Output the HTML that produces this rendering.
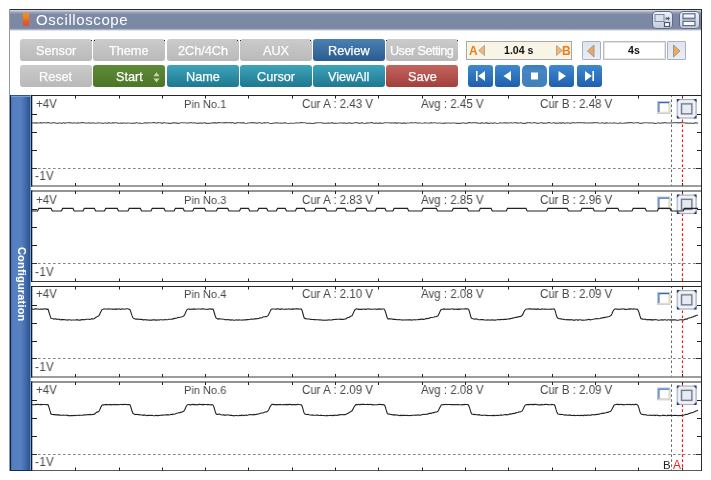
<!DOCTYPE html><html><head><meta charset="utf-8"><style>
*{margin:0;padding:0;box-sizing:border-box}
html,body{width:711px;height:480px;overflow:hidden;background:#fff}
body{position:relative;font-family:"Liberation Sans",sans-serif}
.a{position:absolute}
.t{white-space:nowrap;will-change:transform}
.btn span{will-change:transform;display:inline-block}
.btn{border-radius:3px;color:#fbfbfb;font-size:12.7px;line-height:24px;-webkit-text-stroke:0.25px #fff;text-align:center;white-space:nowrap}
.lbl{font-size:12px;line-height:14px;color:#474747;transform:scaleX(0.96);transform-origin:0 0}
</style></head><body><div class="a" style="left:9px;top:9px;width:693px;height:1px;background:#2a2a2a"></div>
<div class="a" style="left:9px;top:9px;width:1px;height:462px;background:#9a9a9a"></div>
<div class="a" style="left:701px;top:9px;width:1px;height:462px;background:#2a2a2a"></div>
<div class="a" style="left:10px;top:10px;width:691px;height:21px;background:linear-gradient(#dfe2ea 0px,#bcc2d2 1px,#97a2ba 2.5px,#7d8aa5 4.5px,#7b88a3 18px,#8591ab 19px,#cfd4de 20px,#f2f3f6 21px)"></div>
<div class="a" style="left:23px;top:12.5px;width:6.2px;height:13.8px;background:linear-gradient(#fb8c12 0,#f57d18 40%,#ea5f26 58%,#e24c2e 100%)"></div>
<div class="a t" style="left:36px;top:10px;font-size:15px;line-height:20px;color:#fff;letter-spacing:0.6px">Oscilloscope</div>
<svg class="a" style="left:652px;top:11px" width="21" height="18" viewBox="0 0 21 18">
<defs><linearGradient id="ig" x1="0" y1="0" x2="0" y2="1"><stop offset="0" stop-color="#f2f4f9"/><stop offset="1" stop-color="#c3cadb"/></linearGradient></defs>
<rect x="0.5" y="0.5" width="20" height="17" rx="3.5" fill="url(#ig)" stroke="#5d6b88"/>
<rect x="3" y="3.5" width="9" height="7" fill="#dbe2ee" stroke="#7c89a6"/>
<path d="M13.5 6.5 h2.5 v-1 l2 2 -2 2 v-1 h-2.5z" fill="#4f5d7c"/>
<rect x="12.5" y="11.5" width="5" height="4" fill="#fff" stroke="#4c5a78" stroke-width="1.2"/>
</svg>
<svg class="a" style="left:679px;top:11px" width="21" height="18" viewBox="0 0 21 18">
<rect x="0.5" y="0.5" width="20" height="17" rx="3.5" fill="url(#ig)" stroke="#5d6b88"/>
<rect x="4" y="2.8" width="12" height="4.4" fill="#f4f7fb" stroke="#4f5d7c" stroke-width="1.1"/>
<rect x="4" y="10.3" width="12" height="4.4" fill="#f4f7fb" stroke="#4f5d7c" stroke-width="1.1"/>
<line x1="3" y1="8.7" x2="17" y2="8.7" stroke="#98a3ba" stroke-width="1"/>
</svg>
<div class="a btn" style="left:20px;top:39px;width:72px;height:22px;background:linear-gradient(#cbcbcb,#b9b9b9)"><span style="">Sensor</span></div>
<div class="a btn" style="left:93px;top:39px;width:72px;height:22px;background:linear-gradient(#cbcbcb,#b9b9b9)"><span style="">Theme</span></div>
<div class="a btn" style="left:167px;top:39px;width:72px;height:22px;background:linear-gradient(#cbcbcb,#b9b9b9)"><span style="">2Ch/4Ch</span></div>
<div class="a btn" style="left:240px;top:39px;width:72px;height:22px;background:linear-gradient(#cbcbcb,#b9b9b9)"><span style="">AUX</span></div>
<div class="a btn" style="left:313px;top:39px;width:72px;height:22px;background:linear-gradient(#4b80b1,#2b5b8f)"><span style="">Review</span></div>
<div class="a btn" style="left:386px;top:39px;width:72px;height:22px;background:linear-gradient(#cbcbcb,#b9b9b9)"><span style="letter-spacing:-0.55px;">User Setting</span></div>
<div class="a btn" style="left:20px;top:65px;width:72px;height:22px;background:linear-gradient(#cbcbcb,#b9b9b9)"><span style="">Reset</span></div>
<div class="a btn" style="left:93px;top:65px;width:72px;height:22px;background:linear-gradient(#5f8a37,#4b7628)"><span style="">Start</span></div>
<div class="a btn" style="left:167px;top:65px;width:72px;height:22px;background:linear-gradient(#3ea4ba,#1e7890)"><span style="">Name</span></div>
<div class="a btn" style="left:240px;top:65px;width:72px;height:22px;background:linear-gradient(#3ea4ba,#1e7890)"><span style="">Cursor</span></div>
<div class="a btn" style="left:313px;top:65px;width:72px;height:22px;background:linear-gradient(#3ea4ba,#1e7890)"><span style="">ViewAll</span></div>
<div class="a btn" style="left:386px;top:65px;width:72px;height:22px;background:linear-gradient(#c4655f,#a23f3c)"><span style="">Save</span></div>
<svg class="a" style="left:152.5px;top:71.5px" width="7" height="11" viewBox="0 0 7 11"><path d="M3.5 0.3 L6.6 4.3 H0.4Z M3.5 10.5 L6.6 6.5 H0.4Z" fill="#c9d4b0"/></svg>
<div class="a" style="left:466px;top:41px;width:106px;height:19px;background:#f8f5e7;border:1px solid #a9a9a4"></div>
<div class="a t" style="left:469px;top:41.5px;font-size:12px;line-height:19px;font-weight:bold;color:#f07a16">A</div>
<svg class="a" style="left:478px;top:45px" width="8" height="11" viewBox="0 0 8 11"><path d="M6.5 0.5 V10.5 L0.7 5.5Z" fill="#f6b477" stroke="#9aa283" stroke-width="0.8"/></svg>
<div class="a t" style="left:503.5px;top:41px;font-size:10.6px;line-height:19.5px;font-weight:bold;color:#111">1.04 s</div>
<svg class="a" style="left:554.5px;top:45px" width="8" height="11" viewBox="0 0 8 11"><path d="M1.5 0.5 V10.5 L7.3 5.5Z" fill="#f6b477" stroke="#9aa283" stroke-width="0.8"/></svg>
<div class="a t" style="left:562px;top:41.5px;font-size:12px;line-height:19px;font-weight:bold;color:#f07a16">B</div>
<div class="a" style="left:582px;top:41px;width:19px;height:19px;background:linear-gradient(#dfe4ee,#e9edf4);border:1px solid #a9b1c0;border-radius:1px"></div>
<svg class="a" style="left:586px;top:44px" width="11" height="14" viewBox="0 0 11 14"><path d="M8 1 V13 L1.5 7Z" fill="#f3a850" stroke="#8b95a0" stroke-width="0.9"/></svg>
<div class="a" style="left:603px;top:41px;width:63px;height:19px;background:#fff;border:1px solid #bdbdbd;box-shadow:inset 1px 1px 0 #e2e2e2,inset -1px -1px 0 #e6e6e6"></div>
<div class="a t" style="left:628px;top:41px;font-size:10.6px;line-height:19.5px;font-weight:bold;color:#111">4s</div>
<div class="a" style="left:667px;top:41px;width:19px;height:19px;background:linear-gradient(#dfe4ee,#e9edf4);border:1px solid #a9b1c0;border-radius:1px"></div>
<svg class="a" style="left:671px;top:44px" width="11" height="14" viewBox="0 0 11 14"><path d="M2.5 1 V13 L9 7Z" fill="#f3a850" stroke="#8b95a0" stroke-width="0.9"/></svg>
<div class="a" style="left:468px;top:65px;width:25px;height:22px;border-radius:3px;background:linear-gradient(#3f89cf,#1f5fad)"></div>
<svg class="a" style="left:468px;top:65px" width="25" height="22" viewBox="0 0 25 22"><path d="M8 6 h1.6 v10 h-1.6z M17 6 V16 L10.2 11Z" fill="#fff"/></svg>
<div class="a" style="left:495px;top:65px;width:25px;height:22px;border-radius:3px;background:linear-gradient(#3f89cf,#1f5fad)"></div>
<svg class="a" style="left:495px;top:65px" width="25" height="22" viewBox="0 0 25 22"><path d="M16 6 V16 L8.5 11Z" fill="#fff"/></svg>
<div class="a" style="left:522px;top:65px;width:25px;height:22px;border-radius:5px;background:linear-gradient(#3a7cc0 0,#4a88c4 35%,#4584bf 40%,#4080ba 100%)"></div>
<svg class="a" style="left:522px;top:65px" width="25" height="22" viewBox="0 0 25 22"><rect x="9" y="7.5" width="7" height="7" fill="#fff"/></svg>
<div class="a" style="left:549px;top:65px;width:25px;height:22px;border-radius:3px;background:linear-gradient(#3f89cf,#1f5fad)"></div>
<svg class="a" style="left:549px;top:65px" width="25" height="22" viewBox="0 0 25 22"><path d="M9.5 6 V16 L17 11Z" fill="#fff"/></svg>
<div class="a" style="left:577px;top:65px;width:25px;height:22px;border-radius:3px;background:linear-gradient(#3f89cf,#1f5fad)"></div>
<svg class="a" style="left:577px;top:65px" width="25" height="22" viewBox="0 0 25 22"><path d="M8 6 V16 L14.8 11Z M15.4 6 h1.6 v10 h-1.6z" fill="#fff"/></svg>
<div class="a" style="left:10px;top:95px;width:21px;height:376px;background:linear-gradient(90deg,#0c2444 0,#0c2444 1px,#4670b0 1px,#5680c2 3px,#5680c0 11px,#3a64a2 17px,#2a5090 20px,#7ba2cc 20px,#7ba2cc 21px)"></div>
<div class="a" style="left:10px;top:470px;width:22px;height:1px;background:#1a2a50"></div>
<div class="a" style="left:11px;top:95px;width:19px;height:1px;background:#2c5288"></div>
<div class="a" style="left:11px;top:96px;width:19px;height:1px;background:#7d9dd0"></div>
<div class="a t" style="left:26.6px;top:246.5px;transform-origin:0 0;transform:rotate(90deg);font-size:11px;font-weight:bold;line-height:11px;color:#fff;white-space:nowrap;letter-spacing:0.18px">Configuration</div>
<svg class="a" style="left:0;top:0" width="711" height="480" viewBox="0 0 711 480"><rect x="31" y="95.5" width="670" height="90.5" fill="#fff"/><line x1="31" y1="95.5" x2="701" y2="95.5" stroke="#262626" stroke-width="1"/><line x1="31" y1="186.0" x2="701" y2="186.0" stroke="#3a3a3a" stroke-width="1"/><line x1="31.65" y1="95.0" x2="31.65" y2="186.5" stroke="#0e1a2c" stroke-width="1.3"/><line x1="75.5" y1="95.5" x2="75.5" y2="98.5" stroke="#222" stroke-width="1"/><line x1="75.5" y1="183.0" x2="75.5" y2="186.0" stroke="#222" stroke-width="1"/><line x1="119.5" y1="95.5" x2="119.5" y2="98.5" stroke="#222" stroke-width="1"/><line x1="119.5" y1="183.0" x2="119.5" y2="186.0" stroke="#222" stroke-width="1"/><line x1="162.5" y1="95.5" x2="162.5" y2="98.5" stroke="#222" stroke-width="1"/><line x1="162.5" y1="183.0" x2="162.5" y2="186.0" stroke="#222" stroke-width="1"/><line x1="205.5" y1="95.5" x2="205.5" y2="98.5" stroke="#222" stroke-width="1"/><line x1="205.5" y1="183.0" x2="205.5" y2="186.0" stroke="#222" stroke-width="1"/><line x1="248.5" y1="95.5" x2="248.5" y2="98.5" stroke="#222" stroke-width="1"/><line x1="248.5" y1="183.0" x2="248.5" y2="186.0" stroke="#222" stroke-width="1"/><line x1="292.5" y1="95.5" x2="292.5" y2="98.5" stroke="#222" stroke-width="1"/><line x1="292.5" y1="183.0" x2="292.5" y2="186.0" stroke="#222" stroke-width="1"/><line x1="335.5" y1="95.5" x2="335.5" y2="98.5" stroke="#222" stroke-width="1"/><line x1="335.5" y1="183.0" x2="335.5" y2="186.0" stroke="#222" stroke-width="1"/><line x1="378.5" y1="95.5" x2="378.5" y2="98.5" stroke="#222" stroke-width="1"/><line x1="378.5" y1="183.0" x2="378.5" y2="186.0" stroke="#222" stroke-width="1"/><line x1="422.5" y1="95.5" x2="422.5" y2="98.5" stroke="#222" stroke-width="1"/><line x1="422.5" y1="183.0" x2="422.5" y2="186.0" stroke="#222" stroke-width="1"/><line x1="465.5" y1="95.5" x2="465.5" y2="98.5" stroke="#222" stroke-width="1"/><line x1="465.5" y1="183.0" x2="465.5" y2="186.0" stroke="#222" stroke-width="1"/><line x1="508.5" y1="95.5" x2="508.5" y2="98.5" stroke="#222" stroke-width="1"/><line x1="508.5" y1="183.0" x2="508.5" y2="186.0" stroke="#222" stroke-width="1"/><line x1="552.5" y1="95.5" x2="552.5" y2="98.5" stroke="#222" stroke-width="1"/><line x1="552.5" y1="183.0" x2="552.5" y2="186.0" stroke="#222" stroke-width="1"/><line x1="595.5" y1="95.5" x2="595.5" y2="98.5" stroke="#222" stroke-width="1"/><line x1="595.5" y1="183.0" x2="595.5" y2="186.0" stroke="#222" stroke-width="1"/><line x1="638.5" y1="95.5" x2="638.5" y2="98.5" stroke="#222" stroke-width="1"/><line x1="638.5" y1="183.0" x2="638.5" y2="186.0" stroke="#222" stroke-width="1"/><line x1="682.5" y1="95.5" x2="682.5" y2="98.5" stroke="#222" stroke-width="1"/><line x1="682.5" y1="183.0" x2="682.5" y2="186.0" stroke="#222" stroke-width="1"/><line x1="32" y1="114.5" x2="37" y2="114.5" stroke="#222" stroke-width="1"/><line x1="697" y1="114.5" x2="701" y2="114.5" stroke="#222" stroke-width="1"/><line x1="32" y1="132.5" x2="37" y2="132.5" stroke="#222" stroke-width="1"/><line x1="697" y1="132.5" x2="701" y2="132.5" stroke="#222" stroke-width="1"/><line x1="32" y1="150.5" x2="37" y2="150.5" stroke="#222" stroke-width="1"/><line x1="697" y1="150.5" x2="701" y2="150.5" stroke="#222" stroke-width="1"/><line x1="32" y1="168.5" x2="701" y2="168.5" stroke="#858585" stroke-width="1" stroke-dasharray="2.6 2.4" stroke-dashoffset="-1"/><line x1="32" y1="168.5" x2="37" y2="168.5" stroke="#333" stroke-width="1"/><line x1="696" y1="168.5" x2="701" y2="168.5" stroke="#333" stroke-width="1"/><line x1="671.5" y1="96.0" x2="671.5" y2="185.5" stroke="#6a6a6a" stroke-width="1" stroke-dasharray="2.6 2.4" stroke-dashoffset="1.5"/><line x1="682.5" y1="96.0" x2="682.5" y2="185.5" stroke="#f01818" stroke-width="1.2" stroke-dasharray="2.6 2.4" stroke-dashoffset="1.5"/><rect x="657.5" y="101.5" width="12.5" height="11.8" fill="#fff" stroke="#c4c4c4" stroke-width="1"/><path d="M659 112.3 H669 V102.8" fill="none" stroke="#e0d6bd" stroke-width="1.1"/><path d="M658.9 112.3 V102.7 H669.2" fill="none" stroke="#2f6cc4" stroke-width="1.2"/><rect x="677.2" y="99.5" width="19" height="18.6" rx="2.5" fill="#d9dee9" stroke="#a4acbc" stroke-width="1"/><rect x="679.2" y="101.5" width="15" height="14.6" rx="2" fill="none" stroke="#f3f5f9" stroke-width="1.6"/><rect x="681.6" y="103.9" width="10.2" height="9.9" fill="#e6eaf2" stroke="#737b8c" stroke-width="1.3"/><path d="M676.8 99.1 h3.2 l-3.2 3.2z" fill="#1f3c6e"/><path d="M696.6 99.1 h-3.2 l3.2 3.2z" fill="#1f3c6e"/><path d="M676.8 118.5 h3.2 l-3.2 -3.2z" fill="#1f3c6e"/><path d="M696.6 118.5 h-3.2 l3.2 -3.2z" fill="#1f3c6e"/><polyline points="32.0,122.84 33.5,122.69 35.0,123.14 36.5,122.62 38.0,123.03 39.5,122.88 41.0,122.60 42.5,123.01 44.0,122.58 45.5,122.94 47.0,122.61 48.5,122.63 50.0,122.93 51.5,123.29 53.0,122.66 54.5,122.75 56.0,123.11 57.5,123.40 59.0,123.07 60.5,122.91 62.0,123.43 63.5,122.59 65.0,123.32 66.5,122.81 68.0,122.68 69.5,122.66 71.0,122.83 72.5,123.28 74.0,122.71 75.5,123.07 77.0,123.13 78.5,122.89 80.0,123.04 81.5,122.61 83.0,122.60 84.5,122.74 86.0,123.16 87.5,122.93 89.0,122.83 90.5,123.08 92.0,122.96 93.5,122.82 95.0,123.26 96.5,123.18 98.0,122.77 99.5,123.07 101.0,123.02 102.5,123.34 104.0,123.21 105.5,122.81 107.0,123.43 108.5,122.66 110.0,122.93 111.5,123.23 113.0,122.69 114.5,122.99 116.0,122.59 117.5,123.15 119.0,123.24 120.5,123.07 122.0,123.34 123.5,122.83 125.0,123.18 126.5,123.08 128.0,123.07 129.5,122.96 131.0,123.31 132.5,123.40 134.0,122.98 135.5,123.15 137.0,122.60 138.5,123.18 140.0,123.13 141.5,123.44 143.0,123.29 144.5,122.81 146.0,122.90 147.5,123.15 149.0,122.57 150.5,122.97 152.0,122.70 153.5,122.66 155.0,122.60 156.5,123.24 158.0,122.67 159.5,122.77 161.0,122.90 162.5,123.33 164.0,122.62 165.5,122.95 167.0,123.04 168.5,123.35 170.0,123.29 171.5,123.33 173.0,122.80 174.5,122.92 176.0,122.87 177.5,123.35 179.0,123.41 180.5,122.69 182.0,122.71 183.5,122.76 185.0,122.76 186.5,122.99 188.0,123.08 189.5,122.79 191.0,122.55 192.5,122.93 194.0,122.88 195.5,123.06 197.0,123.41 198.5,123.17 200.0,123.01 201.5,123.11 203.0,123.16 204.5,122.60 206.0,123.36 207.5,123.25 209.0,123.34 210.5,123.27 212.0,122.90 213.5,122.91 215.0,122.64 216.5,123.12 218.0,122.61 219.5,122.61 221.0,122.74 222.5,122.70 224.0,122.86 225.5,122.60 227.0,122.55 228.5,122.69 230.0,122.64 231.5,122.88 233.0,122.57 234.5,123.34 236.0,123.10 237.5,122.68 239.0,122.78 240.5,122.86 242.0,122.88 243.5,122.66 245.0,123.31 246.5,123.44 248.0,122.97 249.5,122.99 251.0,122.63 252.5,122.64 254.0,122.86 255.5,122.79 257.0,123.30 258.5,122.70 260.0,122.57 261.5,123.41 263.0,123.03 264.5,122.68 266.0,123.04 267.5,122.57 269.0,123.03 270.5,123.43 272.0,123.33 273.5,123.18 275.0,122.79 276.5,122.88 278.0,122.70 279.5,123.24 281.0,123.03 282.5,123.25 284.0,122.85 285.5,122.75 287.0,123.28 288.5,123.44 290.0,123.32 291.5,123.28 293.0,123.29 294.5,123.22 296.0,122.75 297.5,123.02 299.0,122.87 300.5,122.58 302.0,122.58 303.5,122.80 305.0,122.78 306.5,123.17 308.0,123.41 309.5,122.95 311.0,123.39 312.5,123.44 314.0,123.41 315.5,122.88 317.0,122.75 318.5,122.75 320.0,122.73 321.5,122.73 323.0,123.11 324.5,123.36 326.0,123.31 327.5,122.98 329.0,123.14 330.5,123.27 332.0,122.63 333.5,123.14 335.0,123.37 336.5,123.25 338.0,123.23 339.5,122.98 341.0,122.71 342.5,123.26 344.0,122.85 345.5,123.27 347.0,123.42 348.5,122.91 350.0,122.91 351.5,123.40 353.0,123.20 354.5,122.70 356.0,122.66 357.5,122.69 359.0,123.36 360.5,123.28 362.0,122.68 363.5,123.29 365.0,123.43 366.5,123.14 368.0,122.87 369.5,123.04 371.0,122.67 372.5,122.56 374.0,123.42 375.5,123.13 377.0,123.02 378.5,123.39 380.0,122.94 381.5,123.33 383.0,123.29 384.5,122.74 386.0,122.78 387.5,122.81 389.0,122.77 390.5,123.08 392.0,122.78 393.5,122.93 395.0,122.67 396.5,123.37 398.0,122.87 399.5,122.96 401.0,123.08 402.5,123.36 404.0,122.93 405.5,123.38 407.0,123.00 408.5,123.03 410.0,123.02 411.5,122.57 413.0,122.95 414.5,122.71 416.0,122.55 417.5,123.27 419.0,122.71 420.5,122.98 422.0,123.20 423.5,123.05 425.0,122.84 426.5,123.02 428.0,123.05 429.5,123.26 431.0,122.65 432.5,123.05 434.0,122.77 435.5,122.80 437.0,123.25 438.5,123.01 440.0,123.06 441.5,123.23 443.0,123.37 444.5,122.95 446.0,123.10 447.5,123.00 449.0,123.01 450.5,123.17 452.0,122.96 453.5,123.03 455.0,122.98 456.5,123.40 458.0,123.18 459.5,123.34 461.0,123.40 462.5,122.78 464.0,123.05 465.5,123.40 467.0,123.31 468.5,122.67 470.0,122.66 471.5,122.95 473.0,122.62 474.5,122.77 476.0,122.62 477.5,123.15 479.0,123.26 480.5,123.36 482.0,122.69 483.5,123.19 485.0,123.14 486.5,122.68 488.0,123.34 489.5,123.42 491.0,122.75 492.5,123.41 494.0,122.91 495.5,122.99 497.0,123.44 498.5,123.30 500.0,122.70 501.5,122.94 503.0,123.01 504.5,122.86 506.0,122.73 507.5,122.84 509.0,123.20 510.5,122.57 512.0,123.05 513.5,122.95 515.0,122.57 516.5,122.85 518.0,123.11 519.5,123.01 521.0,122.61 522.5,123.44 524.0,123.26 525.5,123.42 527.0,122.64 528.5,122.79 530.0,122.59 531.5,123.25 533.0,122.79 534.5,122.67 536.0,122.93 537.5,123.37 539.0,123.29 540.5,122.78 542.0,122.68 543.5,123.38 545.0,123.06 546.5,123.18 548.0,122.63 549.5,122.60 551.0,123.17 552.5,122.93 554.0,122.62 555.5,123.39 557.0,123.12 558.5,123.27 560.0,122.63 561.5,123.32 563.0,122.61 564.5,123.33 566.0,122.96 567.5,122.86 569.0,123.05 570.5,123.38 572.0,122.79 573.5,122.67 575.0,123.02 576.5,122.76 578.0,122.65 579.5,122.70 581.0,122.60 582.5,122.73 584.0,122.83 585.5,122.82 587.0,123.23 588.5,122.81 590.0,123.00 591.5,122.71 593.0,122.86 594.5,122.57 596.0,122.78 597.5,122.56 599.0,123.21 600.5,123.05 602.0,122.72 603.5,122.98 605.0,123.39 606.5,122.65 608.0,123.29 609.5,122.94 611.0,123.00 612.5,123.30 614.0,122.90 615.5,123.01 617.0,123.17 618.5,123.43 620.0,122.86 621.5,123.30 623.0,123.19 624.5,123.12 626.0,122.91 627.5,122.86 629.0,122.60 630.5,122.67 632.0,122.61 633.5,123.22 635.0,122.78 636.5,122.70 638.0,122.63 639.5,123.31 641.0,123.33 642.5,123.15 644.0,122.80 645.5,122.77 647.0,122.81 648.5,122.96 650.0,122.69 651.5,122.95 653.0,122.79 654.5,123.42 656.0,123.43 657.5,123.04 659.0,122.77 660.5,123.42 662.0,122.83 663.5,122.87 665.0,122.55 666.5,122.89 668.0,122.98 669.5,123.00 671.0,122.73 672.5,123.00 674.0,122.55 675.5,122.79 677.0,122.63 678.5,122.91 680.0,122.59 681.5,122.57 683.0,122.82 684.5,122.76 686.0,123.08 687.5,123.03 689.0,123.23 690.5,123.14 692.0,123.19 693.5,123.34 695.0,122.90 696.5,122.84 698.0,123.44" fill="none" stroke="#555" stroke-width="1.1"/><rect x="31" y="191.0" width="670" height="90.5" fill="#fff"/><line x1="31" y1="191.0" x2="701" y2="191.0" stroke="#262626" stroke-width="1"/><line x1="31" y1="281.5" x2="701" y2="281.5" stroke="#3a3a3a" stroke-width="1"/><line x1="31.65" y1="190.5" x2="31.65" y2="282.0" stroke="#0e1a2c" stroke-width="1.3"/><line x1="75.5" y1="191.0" x2="75.5" y2="194.0" stroke="#222" stroke-width="1"/><line x1="75.5" y1="278.5" x2="75.5" y2="281.5" stroke="#222" stroke-width="1"/><line x1="119.5" y1="191.0" x2="119.5" y2="194.0" stroke="#222" stroke-width="1"/><line x1="119.5" y1="278.5" x2="119.5" y2="281.5" stroke="#222" stroke-width="1"/><line x1="162.5" y1="191.0" x2="162.5" y2="194.0" stroke="#222" stroke-width="1"/><line x1="162.5" y1="278.5" x2="162.5" y2="281.5" stroke="#222" stroke-width="1"/><line x1="205.5" y1="191.0" x2="205.5" y2="194.0" stroke="#222" stroke-width="1"/><line x1="205.5" y1="278.5" x2="205.5" y2="281.5" stroke="#222" stroke-width="1"/><line x1="248.5" y1="191.0" x2="248.5" y2="194.0" stroke="#222" stroke-width="1"/><line x1="248.5" y1="278.5" x2="248.5" y2="281.5" stroke="#222" stroke-width="1"/><line x1="292.5" y1="191.0" x2="292.5" y2="194.0" stroke="#222" stroke-width="1"/><line x1="292.5" y1="278.5" x2="292.5" y2="281.5" stroke="#222" stroke-width="1"/><line x1="335.5" y1="191.0" x2="335.5" y2="194.0" stroke="#222" stroke-width="1"/><line x1="335.5" y1="278.5" x2="335.5" y2="281.5" stroke="#222" stroke-width="1"/><line x1="378.5" y1="191.0" x2="378.5" y2="194.0" stroke="#222" stroke-width="1"/><line x1="378.5" y1="278.5" x2="378.5" y2="281.5" stroke="#222" stroke-width="1"/><line x1="422.5" y1="191.0" x2="422.5" y2="194.0" stroke="#222" stroke-width="1"/><line x1="422.5" y1="278.5" x2="422.5" y2="281.5" stroke="#222" stroke-width="1"/><line x1="465.5" y1="191.0" x2="465.5" y2="194.0" stroke="#222" stroke-width="1"/><line x1="465.5" y1="278.5" x2="465.5" y2="281.5" stroke="#222" stroke-width="1"/><line x1="508.5" y1="191.0" x2="508.5" y2="194.0" stroke="#222" stroke-width="1"/><line x1="508.5" y1="278.5" x2="508.5" y2="281.5" stroke="#222" stroke-width="1"/><line x1="552.5" y1="191.0" x2="552.5" y2="194.0" stroke="#222" stroke-width="1"/><line x1="552.5" y1="278.5" x2="552.5" y2="281.5" stroke="#222" stroke-width="1"/><line x1="595.5" y1="191.0" x2="595.5" y2="194.0" stroke="#222" stroke-width="1"/><line x1="595.5" y1="278.5" x2="595.5" y2="281.5" stroke="#222" stroke-width="1"/><line x1="638.5" y1="191.0" x2="638.5" y2="194.0" stroke="#222" stroke-width="1"/><line x1="638.5" y1="278.5" x2="638.5" y2="281.5" stroke="#222" stroke-width="1"/><line x1="682.5" y1="191.0" x2="682.5" y2="194.0" stroke="#222" stroke-width="1"/><line x1="682.5" y1="278.5" x2="682.5" y2="281.5" stroke="#222" stroke-width="1"/><line x1="32" y1="209.5" x2="37" y2="209.5" stroke="#222" stroke-width="1"/><line x1="697" y1="209.5" x2="701" y2="209.5" stroke="#222" stroke-width="1"/><line x1="32" y1="227.5" x2="37" y2="227.5" stroke="#222" stroke-width="1"/><line x1="697" y1="227.5" x2="701" y2="227.5" stroke="#222" stroke-width="1"/><line x1="32" y1="245.5" x2="37" y2="245.5" stroke="#222" stroke-width="1"/><line x1="697" y1="245.5" x2="701" y2="245.5" stroke="#222" stroke-width="1"/><line x1="32" y1="263.5" x2="701" y2="263.5" stroke="#858585" stroke-width="1" stroke-dasharray="2.6 2.4" stroke-dashoffset="-1"/><line x1="32" y1="263.5" x2="37" y2="263.5" stroke="#333" stroke-width="1"/><line x1="696" y1="263.5" x2="701" y2="263.5" stroke="#333" stroke-width="1"/><line x1="671.5" y1="191.5" x2="671.5" y2="281.0" stroke="#6a6a6a" stroke-width="1" stroke-dasharray="2.6 2.4" stroke-dashoffset="3.2"/><line x1="682.5" y1="191.5" x2="682.5" y2="281.0" stroke="#f01818" stroke-width="1.2" stroke-dasharray="2.6 2.4" stroke-dashoffset="3.2"/><rect x="657.5" y="197.0" width="12.5" height="11.8" fill="#fff" stroke="#c4c4c4" stroke-width="1"/><path d="M659 207.8 H669 V198.3" fill="none" stroke="#e0d6bd" stroke-width="1.1"/><path d="M658.9 207.8 V198.2 H669.2" fill="none" stroke="#2f6cc4" stroke-width="1.2"/><rect x="677.2" y="195.0" width="19" height="18.6" rx="2.5" fill="#d9dee9" stroke="#a4acbc" stroke-width="1"/><rect x="679.2" y="197.0" width="15" height="14.6" rx="2" fill="none" stroke="#f3f5f9" stroke-width="1.6"/><rect x="681.6" y="199.4" width="10.2" height="9.9" fill="#e6eaf2" stroke="#737b8c" stroke-width="1.3"/><path d="M676.8 194.6 h3.2 l-3.2 3.2z" fill="#1f3c6e"/><path d="M696.6 194.6 h-3.2 l3.2 3.2z" fill="#1f3c6e"/><path d="M676.8 214.0 h3.2 l-3.2 -3.2z" fill="#1f3c6e"/><path d="M696.6 214.0 h-3.2 l3.2 -3.2z" fill="#1f3c6e"/><polyline points="32.0,211.00 37.6,211.00 38.8,208.40 51.1,208.40 52.3,211.00 61.4,211.00 62.6,208.40 73.0,208.40 74.2,211.00 83.1,211.00 84.3,208.40 94.4,208.40 95.6,211.00 104.5,211.00 105.7,208.40 117.3,208.40 118.5,211.00 128.0,211.00 129.2,208.40 140.4,208.40 141.6,211.00 151.0,211.00 152.2,208.40 164.0,208.40 165.2,211.00 174.1,211.00 175.3,208.40 183.1,208.40 184.3,211.00 192.8,211.00 194.0,208.40 204.6,208.40 205.8,211.00 216.4,211.00 217.6,208.40 227.7,208.40 228.9,211.00 239.5,211.00 240.7,208.40 248.5,208.40 249.7,211.00 257.5,211.00 258.7,208.40 266.7,208.40 267.9,211.00 276.3,211.00 277.5,208.40 285.3,208.40 286.5,211.00 295.4,211.00 296.6,208.40 304.4,208.40 305.6,211.00 314.5,211.00 315.7,208.40 325.8,208.40 327.0,211.00 335.9,211.00 337.1,208.40 345.1,208.40 346.3,211.00 355.2,211.00 356.4,208.40 365.9,208.40 367.1,211.00 375.4,211.00 376.6,208.40 385.0,208.40 386.2,211.00 392.9,211.00 394.1,208.40 407.5,208.40 408.7,211.00 421.8,211.00 423.0,208.40 436.4,208.40 437.6,211.00 452.1,211.00 453.3,208.40 467.3,208.40 468.5,211.00 479.1,211.00 480.3,208.40 491.1,208.40 492.3,211.00 506.3,211.00 507.5,208.40 526.0,208.40 527.2,211.00 546.8,211.00 548.0,208.40 567.3,208.40 568.5,211.00 580.8,211.00 582.0,208.40 593.1,208.40 594.3,211.00 605.5,211.00 606.7,208.40 617.9,208.40 619.1,211.00 632.0,211.00 633.2,208.40 645.2,208.40 646.4,211.00 657.4,211.00 658.6,208.40 670.0,208.40 671.2,211.00 683.2,211.00 684.4,208.40 698.0,208.40" fill="none" stroke="#222" stroke-width="1.1"/><rect x="31" y="286.5" width="670" height="90.5" fill="#fff"/><line x1="31" y1="286.5" x2="701" y2="286.5" stroke="#262626" stroke-width="1"/><line x1="31" y1="377.0" x2="701" y2="377.0" stroke="#3a3a3a" stroke-width="1"/><line x1="31.65" y1="286.0" x2="31.65" y2="377.5" stroke="#0e1a2c" stroke-width="1.3"/><line x1="75.5" y1="286.5" x2="75.5" y2="289.5" stroke="#222" stroke-width="1"/><line x1="75.5" y1="374.0" x2="75.5" y2="377.0" stroke="#222" stroke-width="1"/><line x1="119.5" y1="286.5" x2="119.5" y2="289.5" stroke="#222" stroke-width="1"/><line x1="119.5" y1="374.0" x2="119.5" y2="377.0" stroke="#222" stroke-width="1"/><line x1="162.5" y1="286.5" x2="162.5" y2="289.5" stroke="#222" stroke-width="1"/><line x1="162.5" y1="374.0" x2="162.5" y2="377.0" stroke="#222" stroke-width="1"/><line x1="205.5" y1="286.5" x2="205.5" y2="289.5" stroke="#222" stroke-width="1"/><line x1="205.5" y1="374.0" x2="205.5" y2="377.0" stroke="#222" stroke-width="1"/><line x1="248.5" y1="286.5" x2="248.5" y2="289.5" stroke="#222" stroke-width="1"/><line x1="248.5" y1="374.0" x2="248.5" y2="377.0" stroke="#222" stroke-width="1"/><line x1="292.5" y1="286.5" x2="292.5" y2="289.5" stroke="#222" stroke-width="1"/><line x1="292.5" y1="374.0" x2="292.5" y2="377.0" stroke="#222" stroke-width="1"/><line x1="335.5" y1="286.5" x2="335.5" y2="289.5" stroke="#222" stroke-width="1"/><line x1="335.5" y1="374.0" x2="335.5" y2="377.0" stroke="#222" stroke-width="1"/><line x1="378.5" y1="286.5" x2="378.5" y2="289.5" stroke="#222" stroke-width="1"/><line x1="378.5" y1="374.0" x2="378.5" y2="377.0" stroke="#222" stroke-width="1"/><line x1="422.5" y1="286.5" x2="422.5" y2="289.5" stroke="#222" stroke-width="1"/><line x1="422.5" y1="374.0" x2="422.5" y2="377.0" stroke="#222" stroke-width="1"/><line x1="465.5" y1="286.5" x2="465.5" y2="289.5" stroke="#222" stroke-width="1"/><line x1="465.5" y1="374.0" x2="465.5" y2="377.0" stroke="#222" stroke-width="1"/><line x1="508.5" y1="286.5" x2="508.5" y2="289.5" stroke="#222" stroke-width="1"/><line x1="508.5" y1="374.0" x2="508.5" y2="377.0" stroke="#222" stroke-width="1"/><line x1="552.5" y1="286.5" x2="552.5" y2="289.5" stroke="#222" stroke-width="1"/><line x1="552.5" y1="374.0" x2="552.5" y2="377.0" stroke="#222" stroke-width="1"/><line x1="595.5" y1="286.5" x2="595.5" y2="289.5" stroke="#222" stroke-width="1"/><line x1="595.5" y1="374.0" x2="595.5" y2="377.0" stroke="#222" stroke-width="1"/><line x1="638.5" y1="286.5" x2="638.5" y2="289.5" stroke="#222" stroke-width="1"/><line x1="638.5" y1="374.0" x2="638.5" y2="377.0" stroke="#222" stroke-width="1"/><line x1="682.5" y1="286.5" x2="682.5" y2="289.5" stroke="#222" stroke-width="1"/><line x1="682.5" y1="374.0" x2="682.5" y2="377.0" stroke="#222" stroke-width="1"/><line x1="32" y1="305.5" x2="37" y2="305.5" stroke="#222" stroke-width="1"/><line x1="697" y1="305.5" x2="701" y2="305.5" stroke="#222" stroke-width="1"/><line x1="32" y1="323.5" x2="37" y2="323.5" stroke="#222" stroke-width="1"/><line x1="697" y1="323.5" x2="701" y2="323.5" stroke="#222" stroke-width="1"/><line x1="32" y1="341.5" x2="37" y2="341.5" stroke="#222" stroke-width="1"/><line x1="697" y1="341.5" x2="701" y2="341.5" stroke="#222" stroke-width="1"/><line x1="32" y1="358.5" x2="701" y2="358.5" stroke="#858585" stroke-width="1" stroke-dasharray="2.6 2.4" stroke-dashoffset="-1"/><line x1="32" y1="358.5" x2="37" y2="358.5" stroke="#333" stroke-width="1"/><line x1="696" y1="358.5" x2="701" y2="358.5" stroke="#333" stroke-width="1"/><line x1="671.5" y1="287.0" x2="671.5" y2="376.5" stroke="#6a6a6a" stroke-width="1" stroke-dasharray="2.6 2.4" stroke-dashoffset="1.5"/><line x1="682.5" y1="287.0" x2="682.5" y2="376.5" stroke="#f01818" stroke-width="1.2" stroke-dasharray="2.6 2.4" stroke-dashoffset="1.5"/><rect x="657.5" y="292.5" width="12.5" height="11.8" fill="#fff" stroke="#c4c4c4" stroke-width="1"/><path d="M659 303.3 H669 V293.8" fill="none" stroke="#e0d6bd" stroke-width="1.1"/><path d="M658.9 303.3 V293.7 H669.2" fill="none" stroke="#2f6cc4" stroke-width="1.2"/><rect x="677.2" y="290.5" width="19" height="18.6" rx="2.5" fill="#d9dee9" stroke="#a4acbc" stroke-width="1"/><rect x="679.2" y="292.5" width="15" height="14.6" rx="2" fill="none" stroke="#f3f5f9" stroke-width="1.6"/><rect x="681.6" y="294.9" width="10.2" height="9.9" fill="#e6eaf2" stroke="#737b8c" stroke-width="1.3"/><path d="M676.8 290.1 h3.2 l-3.2 3.2z" fill="#1f3c6e"/><path d="M696.6 290.1 h-3.2 l3.2 3.2z" fill="#1f3c6e"/><path d="M676.8 309.5 h3.2 l-3.2 -3.2z" fill="#1f3c6e"/><path d="M696.6 309.5 h-3.2 l3.2 -3.2z" fill="#1f3c6e"/><polyline points="32.0,309.08 33.0,309.19 34.0,309.20 35.0,308.89 36.0,308.81 37.0,309.02 38.0,308.96 39.0,309.29 40.0,309.21 41.0,309.16 42.0,309.13 43.0,309.20 44.0,308.89 45.0,309.06 46.0,308.90 47.0,309.34 48.0,309.20 49.0,312.22 50.0,315.41 51.0,318.35 52.0,318.57 53.0,318.73 54.0,319.12 55.0,318.73 56.0,318.87 57.0,319.48 58.0,319.33 59.0,319.17 60.0,319.79 61.0,319.84 62.0,319.41 63.0,319.66 64.0,319.54 65.0,319.70 66.0,319.93 67.0,319.70 68.0,320.05 69.0,319.69 70.0,319.78 71.0,320.18 72.0,319.94 73.0,319.95 74.0,320.05 75.0,319.97 76.0,319.90 77.0,319.67 78.0,320.06 79.0,320.17 80.0,320.13 81.0,319.90 82.0,319.67 83.0,319.62 84.0,319.75 85.0,319.67 86.0,319.26 87.0,319.26 88.0,319.25 89.0,319.25 90.0,319.33 91.0,319.04 92.0,318.65 93.0,319.01 94.0,318.66 95.0,318.09 96.0,317.28 97.0,316.78 98.0,316.13 99.0,315.69 100.0,313.51 101.0,311.58 102.0,309.58 103.0,309.22 104.0,308.82 105.0,308.97 106.0,309.01 107.0,309.18 108.0,308.83 109.0,309.08 110.0,308.93 111.0,308.97 112.0,309.09 113.0,309.38 114.0,309.09 115.0,309.37 116.0,308.90 117.0,309.35 118.0,309.02 119.0,308.91 120.0,309.25 121.0,309.35 122.0,308.80 123.0,308.96 124.0,309.26 125.0,309.01 126.0,308.94 127.0,308.81 128.0,308.82 129.0,309.17 130.0,309.75 131.0,312.33 132.0,315.67 133.0,317.95 134.0,318.56 135.0,318.97 136.0,319.12 137.0,319.13 138.0,318.99 139.0,319.27 140.0,319.34 141.0,319.52 142.0,319.39 143.0,319.87 144.0,319.91 145.0,319.54 146.0,319.67 147.0,320.07 148.0,319.75 149.0,320.19 150.0,319.96 151.0,320.09 152.0,320.11 153.0,319.83 154.0,319.87 155.0,319.85 156.0,320.09 157.0,320.08 158.0,319.72 159.0,320.14 160.0,319.83 161.0,319.68 162.0,319.75 163.0,320.02 164.0,319.70 165.0,319.67 166.0,319.78 167.0,319.72 168.0,319.51 169.0,319.21 170.0,319.22 171.0,319.30 172.0,319.12 173.0,318.87 174.0,318.61 175.0,318.34 176.0,318.29 177.0,317.90 178.0,317.30 179.0,317.44 180.0,317.28 181.0,316.93 182.0,316.72 183.0,316.45 184.0,315.54 185.0,313.92 186.0,311.48 187.0,309.54 188.0,309.01 189.0,308.99 190.0,309.36 191.0,309.21 192.0,309.12 193.0,309.17 194.0,308.87 195.0,309.12 196.0,309.22 197.0,309.04 198.0,308.95 199.0,309.04 200.0,308.99 201.0,309.21 202.0,308.89 203.0,308.85 204.0,308.99 205.0,309.22 206.0,309.26 207.0,309.20 208.0,309.36 209.0,309.02 210.0,308.82 211.0,309.09 212.0,309.07 213.0,309.14 214.0,311.79 215.0,315.22 216.0,317.93 217.0,318.55 218.0,319.05 219.0,318.62 220.0,318.95 221.0,319.01 222.0,319.07 223.0,319.31 224.0,319.27 225.0,319.77 226.0,319.60 227.0,319.79 228.0,319.53 229.0,319.77 230.0,319.91 231.0,320.09 232.0,319.77 233.0,319.93 234.0,320.19 235.0,320.19 236.0,319.83 237.0,320.02 238.0,320.15 239.0,319.92 240.0,320.07 241.0,320.04 242.0,320.20 243.0,319.91 244.0,319.94 245.0,319.70 246.0,319.87 247.0,319.56 248.0,319.60 249.0,319.44 250.0,319.33 251.0,319.14 252.0,319.10 253.0,319.19 254.0,318.91 255.0,318.67 256.0,319.01 257.0,318.57 258.0,318.71 259.0,318.26 260.0,317.88 261.0,317.92 262.0,317.69 263.0,317.09 264.0,316.73 265.0,316.78 266.0,316.66 267.0,316.27 268.0,315.69 269.0,313.69 270.0,311.62 271.0,309.64 272.0,309.04 273.0,309.03 274.0,309.03 275.0,309.04 276.0,309.28 277.0,308.90 278.0,308.92 279.0,308.95 280.0,309.38 281.0,309.11 282.0,308.83 283.0,309.30 284.0,309.32 285.0,309.29 286.0,309.02 287.0,309.24 288.0,308.98 289.0,308.88 290.0,309.32 291.0,309.30 292.0,308.93 293.0,309.33 294.0,308.81 295.0,308.99 296.0,308.81 297.0,308.90 298.0,308.90 299.0,309.23 300.0,308.98 301.0,308.91 302.0,310.30 303.0,313.74 304.0,317.43 305.0,318.66 306.0,318.49 307.0,318.97 308.0,319.00 309.0,319.06 310.0,319.22 311.0,319.39 312.0,319.57 313.0,319.48 314.0,319.64 315.0,319.61 316.0,319.78 317.0,319.69 318.0,319.76 319.0,319.87 320.0,320.03 321.0,319.80 322.0,320.21 323.0,319.97 324.0,320.21 325.0,320.11 326.0,320.27 327.0,320.10 328.0,319.94 329.0,319.91 330.0,320.00 331.0,320.06 332.0,320.07 333.0,319.60 334.0,319.51 335.0,319.49 336.0,319.41 337.0,319.32 338.0,319.22 339.0,319.29 340.0,319.12 341.0,319.37 342.0,319.23 343.0,319.33 344.0,319.22 345.0,318.97 346.0,318.97 347.0,317.92 348.0,317.54 349.0,317.46 350.0,316.69 351.0,316.02 352.0,315.68 353.0,313.70 354.0,311.58 355.0,309.67 356.0,308.95 357.0,308.85 358.0,309.16 359.0,309.37 360.0,309.39 361.0,309.26 362.0,309.36 363.0,309.02 364.0,308.98 365.0,309.35 366.0,309.16 367.0,309.20 368.0,308.81 369.0,308.94 370.0,309.09 371.0,309.24 372.0,309.30 373.0,309.25 374.0,309.00 375.0,309.03 376.0,309.32 377.0,309.39 378.0,309.09 379.0,308.92 380.0,309.17 381.0,309.12 382.0,309.02 383.0,308.94 384.0,309.03 385.0,310.56 386.0,313.63 387.0,317.23 388.0,318.87 389.0,318.89 390.0,318.72 391.0,318.95 392.0,318.88 393.0,319.37 394.0,319.41 395.0,319.23 396.0,319.54 397.0,319.65 398.0,319.71 399.0,319.66 400.0,319.68 401.0,319.76 402.0,320.19 403.0,319.82 404.0,319.96 405.0,319.95 406.0,319.80 407.0,319.94 408.0,319.82 409.0,319.89 410.0,319.90 411.0,319.87 412.0,320.19 413.0,319.77 414.0,319.75 415.0,319.90 416.0,319.69 417.0,319.70 418.0,319.71 419.0,319.29 420.0,319.57 421.0,319.14 422.0,319.13 423.0,319.36 424.0,319.36 425.0,319.06 426.0,318.63 427.0,318.66 428.0,318.32 429.0,318.40 430.0,317.79 431.0,317.52 432.0,317.53 433.0,317.28 434.0,317.00 435.0,316.69 436.0,316.73 437.0,316.18 438.0,315.78 439.0,313.68 440.0,311.53 441.0,309.69 442.0,309.23 443.0,309.25 444.0,308.94 445.0,309.12 446.0,309.24 447.0,309.10 448.0,309.20 449.0,309.17 450.0,309.23 451.0,309.01 452.0,308.98 453.0,308.81 454.0,309.33 455.0,309.27 456.0,309.03 457.0,309.38 458.0,309.34 459.0,308.89 460.0,309.30 461.0,309.05 462.0,308.99 463.0,308.96 464.0,309.05 465.0,308.83 466.0,308.83 467.0,308.87 468.0,308.98 469.0,310.29 470.0,313.62 471.0,317.41 472.0,318.53 473.0,318.74 474.0,318.94 475.0,319.27 476.0,318.92 477.0,319.08 478.0,319.56 479.0,319.69 480.0,319.79 481.0,319.63 482.0,319.61 483.0,319.56 484.0,320.06 485.0,320.02 486.0,319.93 487.0,320.11 488.0,319.82 489.0,320.00 490.0,320.24 491.0,319.77 492.0,320.07 493.0,319.80 494.0,320.17 495.0,320.15 496.0,320.00 497.0,319.83 498.0,319.54 499.0,319.77 500.0,319.62 501.0,319.58 502.0,319.31 503.0,319.73 504.0,319.40 505.0,319.33 506.0,319.40 507.0,319.32 508.0,318.99 509.0,318.86 510.0,318.91 511.0,318.40 512.0,318.49 513.0,317.73 514.0,317.97 515.0,317.58 516.0,317.41 517.0,317.40 518.0,316.71 519.0,316.60 520.0,316.61 521.0,316.35 522.0,315.54 523.0,313.91 524.0,311.66 525.0,310.00 526.0,309.19 527.0,309.02 528.0,308.97 529.0,308.85 530.0,308.87 531.0,308.83 532.0,309.39 533.0,308.88 534.0,309.16 535.0,308.88 536.0,309.38 537.0,309.12 538.0,308.91 539.0,309.30 540.0,309.32 541.0,309.39 542.0,308.93 543.0,309.04 544.0,309.20 545.0,308.97 546.0,309.14 547.0,309.22 548.0,309.25 549.0,309.29 550.0,309.25 551.0,308.97 552.0,309.25 553.0,309.06 554.0,308.90 555.0,310.20 556.0,313.92 557.0,317.12 558.0,318.36 559.0,318.73 560.0,318.81 561.0,318.88 562.0,319.14 563.0,319.24 564.0,319.33 565.0,319.70 566.0,319.74 567.0,319.46 568.0,319.87 569.0,319.61 570.0,320.04 571.0,319.56 572.0,319.76 573.0,320.17 574.0,320.04 575.0,320.09 576.0,319.81 577.0,319.77 578.0,320.28 579.0,319.74 580.0,319.79 581.0,319.93 582.0,320.14 583.0,320.03 584.0,320.18 585.0,320.01 586.0,319.75 587.0,319.98 588.0,319.56 589.0,319.34 590.0,319.81 591.0,319.68 592.0,319.46 593.0,319.26 594.0,318.99 595.0,318.89 596.0,318.69 597.0,318.58 598.0,318.69 599.0,318.73 600.0,318.54 601.0,318.08 602.0,317.97 603.0,317.64 604.0,317.62 605.0,317.37 606.0,317.32 607.0,317.03 608.0,316.72 609.0,316.46 610.0,316.00 611.0,315.50 612.0,313.72 613.0,311.35 614.0,309.60 615.0,309.05 616.0,308.91 617.0,309.17 618.0,309.00 619.0,309.39 620.0,309.21 621.0,309.11 622.0,309.06 623.0,309.03 624.0,308.92 625.0,309.38 626.0,309.35 627.0,309.19 628.0,309.19 629.0,308.89 630.0,309.12 631.0,308.90 632.0,308.99 633.0,309.15 634.0,308.90 635.0,308.94 636.0,309.24 637.0,309.09 638.0,310.03 639.0,312.54 640.0,316.08 641.0,318.73 642.0,318.85 643.0,319.12 644.0,319.22 645.0,319.12 646.0,319.74 647.0,319.55 648.0,319.88 649.0,319.49 650.0,319.62 651.0,319.83 652.0,319.68 653.0,320.08 654.0,319.75 655.0,319.66 656.0,319.72 657.0,319.80 658.0,320.22 659.0,320.19 660.0,320.07 661.0,319.93 662.0,319.70 663.0,320.18 664.0,319.76 665.0,319.81 666.0,319.95 667.0,320.21 668.0,319.80 669.0,319.73 670.0,320.24 671.0,319.70 672.0,320.14 673.0,319.78 674.0,319.88 675.0,319.82 676.0,319.96 677.0,320.25 678.0,320.20 679.0,320.02 680.0,319.75 681.0,319.80 682.0,319.88 683.0,320.03 684.0,319.90 685.0,319.12 686.0,319.04 687.0,319.13 688.0,318.34 689.0,317.97 690.0,317.75 691.0,317.77 692.0,317.04 693.0,316.94 694.0,316.19 695.0,316.12 696.0,315.43 697.0,315.28 698.0,314.95" fill="none" stroke="#222" stroke-width="1.1"/><rect x="31" y="382.0" width="670" height="88.5" fill="#fff"/><line x1="31" y1="382.0" x2="701" y2="382.0" stroke="#262626" stroke-width="1"/><line x1="31" y1="470.5" x2="701" y2="470.5" stroke="#5a5a5a" stroke-width="1"/><line x1="31.65" y1="381.5" x2="31.65" y2="471.0" stroke="#0e1a2c" stroke-width="1.3"/><line x1="75.5" y1="382.0" x2="75.5" y2="385.0" stroke="#222" stroke-width="1"/><line x1="75.5" y1="467.5" x2="75.5" y2="470.5" stroke="#222" stroke-width="1"/><line x1="119.5" y1="382.0" x2="119.5" y2="385.0" stroke="#222" stroke-width="1"/><line x1="119.5" y1="467.5" x2="119.5" y2="470.5" stroke="#222" stroke-width="1"/><line x1="162.5" y1="382.0" x2="162.5" y2="385.0" stroke="#222" stroke-width="1"/><line x1="162.5" y1="467.5" x2="162.5" y2="470.5" stroke="#222" stroke-width="1"/><line x1="205.5" y1="382.0" x2="205.5" y2="385.0" stroke="#222" stroke-width="1"/><line x1="205.5" y1="467.5" x2="205.5" y2="470.5" stroke="#222" stroke-width="1"/><line x1="248.5" y1="382.0" x2="248.5" y2="385.0" stroke="#222" stroke-width="1"/><line x1="248.5" y1="467.5" x2="248.5" y2="470.5" stroke="#222" stroke-width="1"/><line x1="292.5" y1="382.0" x2="292.5" y2="385.0" stroke="#222" stroke-width="1"/><line x1="292.5" y1="467.5" x2="292.5" y2="470.5" stroke="#222" stroke-width="1"/><line x1="335.5" y1="382.0" x2="335.5" y2="385.0" stroke="#222" stroke-width="1"/><line x1="335.5" y1="467.5" x2="335.5" y2="470.5" stroke="#222" stroke-width="1"/><line x1="378.5" y1="382.0" x2="378.5" y2="385.0" stroke="#222" stroke-width="1"/><line x1="378.5" y1="467.5" x2="378.5" y2="470.5" stroke="#222" stroke-width="1"/><line x1="422.5" y1="382.0" x2="422.5" y2="385.0" stroke="#222" stroke-width="1"/><line x1="422.5" y1="467.5" x2="422.5" y2="470.5" stroke="#222" stroke-width="1"/><line x1="465.5" y1="382.0" x2="465.5" y2="385.0" stroke="#222" stroke-width="1"/><line x1="465.5" y1="467.5" x2="465.5" y2="470.5" stroke="#222" stroke-width="1"/><line x1="508.5" y1="382.0" x2="508.5" y2="385.0" stroke="#222" stroke-width="1"/><line x1="508.5" y1="467.5" x2="508.5" y2="470.5" stroke="#222" stroke-width="1"/><line x1="552.5" y1="382.0" x2="552.5" y2="385.0" stroke="#222" stroke-width="1"/><line x1="552.5" y1="467.5" x2="552.5" y2="470.5" stroke="#222" stroke-width="1"/><line x1="595.5" y1="382.0" x2="595.5" y2="385.0" stroke="#222" stroke-width="1"/><line x1="595.5" y1="467.5" x2="595.5" y2="470.5" stroke="#222" stroke-width="1"/><line x1="638.5" y1="382.0" x2="638.5" y2="385.0" stroke="#222" stroke-width="1"/><line x1="638.5" y1="467.5" x2="638.5" y2="470.5" stroke="#222" stroke-width="1"/><line x1="682.5" y1="382.0" x2="682.5" y2="385.0" stroke="#222" stroke-width="1"/><line x1="682.5" y1="467.5" x2="682.5" y2="470.5" stroke="#222" stroke-width="1"/><line x1="32" y1="400.5" x2="37" y2="400.5" stroke="#222" stroke-width="1"/><line x1="697" y1="400.5" x2="701" y2="400.5" stroke="#222" stroke-width="1"/><line x1="32" y1="418.5" x2="37" y2="418.5" stroke="#222" stroke-width="1"/><line x1="697" y1="418.5" x2="701" y2="418.5" stroke="#222" stroke-width="1"/><line x1="32" y1="436.5" x2="37" y2="436.5" stroke="#222" stroke-width="1"/><line x1="697" y1="436.5" x2="701" y2="436.5" stroke="#222" stroke-width="1"/><line x1="32" y1="454.5" x2="701" y2="454.5" stroke="#858585" stroke-width="1" stroke-dasharray="2.6 2.4" stroke-dashoffset="-1"/><line x1="32" y1="454.5" x2="37" y2="454.5" stroke="#333" stroke-width="1"/><line x1="696" y1="454.5" x2="701" y2="454.5" stroke="#333" stroke-width="1"/><line x1="671.5" y1="382.5" x2="671.5" y2="470.0" stroke="#6a6a6a" stroke-width="1" stroke-dasharray="2.6 2.4" stroke-dashoffset="3.2"/><line x1="682.5" y1="382.5" x2="682.5" y2="470.0" stroke="#f01818" stroke-width="1.2" stroke-dasharray="2.6 2.4" stroke-dashoffset="3.2"/><rect x="657.5" y="388.0" width="12.5" height="11.8" fill="#fff" stroke="#c4c4c4" stroke-width="1"/><path d="M659 398.8 H669 V389.3" fill="none" stroke="#e0d6bd" stroke-width="1.1"/><path d="M658.9 398.8 V389.2 H669.2" fill="none" stroke="#2f6cc4" stroke-width="1.2"/><rect x="677.2" y="386.0" width="19" height="18.6" rx="2.5" fill="#d9dee9" stroke="#a4acbc" stroke-width="1"/><rect x="679.2" y="388.0" width="15" height="14.6" rx="2" fill="none" stroke="#f3f5f9" stroke-width="1.6"/><rect x="681.6" y="390.4" width="10.2" height="9.9" fill="#e6eaf2" stroke="#737b8c" stroke-width="1.3"/><path d="M676.8 385.6 h3.2 l-3.2 3.2z" fill="#1f3c6e"/><path d="M696.6 385.6 h-3.2 l3.2 3.2z" fill="#1f3c6e"/><path d="M676.8 405.0 h3.2 l-3.2 -3.2z" fill="#1f3c6e"/><path d="M696.6 405.0 h-3.2 l3.2 -3.2z" fill="#1f3c6e"/><polyline points="32.0,404.46 33.0,404.71 34.0,404.71 35.0,404.81 36.0,404.41 37.0,404.44 38.0,404.39 39.0,404.44 40.0,404.74 41.0,404.38 42.0,404.62 43.0,404.43 44.0,404.48 45.0,404.56 46.0,404.80 47.0,404.67 48.0,404.67 49.0,407.40 50.0,410.96 51.0,413.96 52.0,414.35 53.0,414.47 54.0,414.61 55.0,414.67 56.0,414.90 57.0,414.91 58.0,414.68 59.0,415.12 60.0,414.99 61.0,415.22 62.0,415.18 63.0,415.16 64.0,415.18 65.0,415.27 66.0,415.25 67.0,415.17 68.0,415.62 69.0,415.64 70.0,415.77 71.0,415.61 72.0,415.53 73.0,415.65 74.0,415.28 75.0,415.59 76.0,415.44 77.0,415.25 78.0,415.24 79.0,415.40 80.0,415.20 81.0,415.28 82.0,415.32 83.0,415.13 84.0,414.91 85.0,415.06 86.0,414.84 87.0,414.76 88.0,414.65 89.0,414.66 90.0,414.39 91.0,414.63 92.0,414.71 93.0,414.25 94.0,414.33 95.0,413.83 96.0,412.68 97.0,412.11 98.0,411.88 99.0,411.22 100.0,409.33 101.0,406.85 102.0,405.23 103.0,404.82 104.0,404.83 105.0,404.78 106.0,404.42 107.0,404.81 108.0,404.52 109.0,404.73 110.0,404.38 111.0,404.88 112.0,404.66 113.0,404.73 114.0,404.43 115.0,404.67 116.0,404.65 117.0,404.65 118.0,404.52 119.0,404.74 120.0,404.50 121.0,404.48 122.0,404.40 123.0,404.71 124.0,404.37 125.0,404.44 126.0,404.34 127.0,404.69 128.0,404.63 129.0,404.63 130.0,404.68 131.0,407.50 132.0,411.07 133.0,413.49 134.0,413.87 135.0,414.60 136.0,414.20 137.0,414.42 138.0,414.51 139.0,414.82 140.0,414.60 141.0,414.93 142.0,414.95 143.0,415.31 144.0,414.88 145.0,415.14 146.0,415.29 147.0,415.63 148.0,415.40 149.0,415.41 150.0,415.55 151.0,415.35 152.0,415.21 153.0,415.50 154.0,415.75 155.0,415.64 156.0,415.34 157.0,415.58 158.0,415.65 159.0,415.27 160.0,415.43 161.0,415.25 162.0,415.13 163.0,415.10 164.0,414.99 165.0,415.01 166.0,414.75 167.0,414.88 168.0,414.61 169.0,414.92 170.0,414.72 171.0,414.26 172.0,414.61 173.0,414.14 174.0,414.19 175.0,413.95 176.0,413.54 177.0,413.24 178.0,413.05 179.0,412.59 180.0,412.75 181.0,412.02 182.0,412.17 183.0,411.53 184.0,410.90 185.0,409.18 186.0,406.77 187.0,405.05 188.0,404.52 189.0,404.57 190.0,404.83 191.0,404.89 192.0,404.33 193.0,404.62 194.0,404.38 195.0,404.78 196.0,404.49 197.0,404.84 198.0,404.63 199.0,404.38 200.0,404.30 201.0,404.45 202.0,404.82 203.0,404.39 204.0,404.59 205.0,404.52 206.0,404.51 207.0,404.78 208.0,404.43 209.0,404.73 210.0,404.70 211.0,404.86 212.0,404.61 213.0,405.08 214.0,407.16 215.0,410.86 216.0,413.65 217.0,414.36 218.0,414.53 219.0,414.18 220.0,414.31 221.0,414.66 222.0,414.94 223.0,414.87 224.0,414.82 225.0,415.30 226.0,414.98 227.0,414.92 228.0,414.97 229.0,415.01 230.0,415.48 231.0,415.15 232.0,415.55 233.0,415.67 234.0,415.77 235.0,415.67 236.0,415.45 237.0,415.57 238.0,415.70 239.0,415.61 240.0,415.34 241.0,415.60 242.0,415.18 243.0,415.26 244.0,415.63 245.0,415.27 246.0,415.09 247.0,415.34 248.0,415.07 249.0,414.73 250.0,414.66 251.0,414.71 252.0,414.66 253.0,414.93 254.0,414.41 255.0,414.65 256.0,414.54 257.0,414.15 258.0,414.25 259.0,413.86 260.0,413.44 261.0,413.06 262.0,412.93 263.0,412.94 264.0,412.47 265.0,412.02 266.0,411.88 267.0,411.69 268.0,410.84 269.0,409.29 270.0,406.77 271.0,405.47 272.0,404.41 273.0,404.36 274.0,404.65 275.0,404.48 276.0,404.83 277.0,404.60 278.0,404.61 279.0,404.80 280.0,404.43 281.0,404.75 282.0,404.69 283.0,404.56 284.0,404.88 285.0,404.31 286.0,404.82 287.0,404.39 288.0,404.80 289.0,404.39 290.0,404.33 291.0,404.60 292.0,404.86 293.0,404.45 294.0,404.59 295.0,404.66 296.0,404.45 297.0,404.62 298.0,404.31 299.0,404.57 300.0,404.76 301.0,404.50 302.0,405.82 303.0,409.08 304.0,412.83 305.0,414.06 306.0,414.48 307.0,414.50 308.0,414.24 309.0,414.84 310.0,414.96 311.0,414.99 312.0,415.09 313.0,415.09 314.0,415.19 315.0,415.23 316.0,415.25 317.0,415.11 318.0,415.09 319.0,415.49 320.0,415.46 321.0,415.17 322.0,415.54 323.0,415.55 324.0,415.50 325.0,415.66 326.0,415.73 327.0,415.42 328.0,415.67 329.0,415.46 330.0,415.48 331.0,415.35 332.0,415.63 333.0,415.29 334.0,415.55 335.0,415.12 336.0,415.26 337.0,415.34 338.0,415.13 339.0,414.86 340.0,414.60 341.0,414.74 342.0,414.61 343.0,414.74 344.0,414.61 345.0,414.62 346.0,414.17 347.0,413.65 348.0,413.24 349.0,412.85 350.0,411.95 351.0,411.53 352.0,410.81 353.0,409.14 354.0,406.93 355.0,405.56 356.0,404.42 357.0,404.86 358.0,404.48 359.0,404.42 360.0,404.88 361.0,404.35 362.0,404.37 363.0,404.38 364.0,404.34 365.0,404.53 366.0,404.43 367.0,404.40 368.0,404.31 369.0,404.72 370.0,404.33 371.0,404.44 372.0,404.64 373.0,404.83 374.0,404.70 375.0,404.73 376.0,404.72 377.0,404.78 378.0,404.81 379.0,404.39 380.0,404.33 381.0,404.67 382.0,404.61 383.0,404.61 384.0,404.77 385.0,405.80 386.0,409.47 387.0,412.66 388.0,414.05 389.0,414.09 390.0,414.24 391.0,414.55 392.0,414.65 393.0,414.97 394.0,414.70 395.0,415.05 396.0,414.77 397.0,415.19 398.0,414.96 399.0,415.45 400.0,415.57 401.0,415.20 402.0,415.57 403.0,415.26 404.0,415.34 405.0,415.24 406.0,415.46 407.0,415.26 408.0,415.62 409.0,415.54 410.0,415.43 411.0,415.58 412.0,415.27 413.0,415.30 414.0,415.27 415.0,415.01 416.0,415.49 417.0,414.94 418.0,414.88 419.0,415.23 420.0,415.16 421.0,414.85 422.0,414.73 423.0,414.46 424.0,414.27 425.0,414.47 426.0,414.18 427.0,413.99 428.0,414.19 429.0,413.41 430.0,413.37 431.0,413.35 432.0,413.10 433.0,412.46 434.0,412.60 435.0,412.24 436.0,412.03 437.0,411.97 438.0,411.20 439.0,409.31 440.0,407.21 441.0,405.27 442.0,404.63 443.0,404.79 444.0,404.67 445.0,404.53 446.0,404.31 447.0,404.77 448.0,404.50 449.0,404.56 450.0,404.47 451.0,404.63 452.0,404.54 453.0,404.80 454.0,404.66 455.0,404.64 456.0,404.77 457.0,404.56 458.0,404.62 459.0,404.75 460.0,404.73 461.0,404.75 462.0,404.83 463.0,404.63 464.0,404.63 465.0,404.41 466.0,404.44 467.0,404.56 468.0,404.60 469.0,406.23 470.0,409.08 471.0,412.62 472.0,414.24 473.0,414.22 474.0,414.59 475.0,414.30 476.0,414.79 477.0,414.70 478.0,414.89 479.0,414.68 480.0,414.97 481.0,415.29 482.0,415.33 483.0,415.29 484.0,415.26 485.0,415.08 486.0,415.52 487.0,415.41 488.0,415.60 489.0,415.55 490.0,415.44 491.0,415.72 492.0,415.28 493.0,415.76 494.0,415.22 495.0,415.72 496.0,415.46 497.0,415.34 498.0,415.59 499.0,415.28 500.0,415.21 501.0,414.88 502.0,415.24 503.0,415.06 504.0,414.74 505.0,414.56 506.0,414.64 507.0,414.84 508.0,414.68 509.0,414.31 510.0,413.92 511.0,414.17 512.0,413.57 513.0,413.66 514.0,413.29 515.0,413.34 516.0,412.62 517.0,412.79 518.0,412.51 519.0,411.86 520.0,411.97 521.0,411.58 522.0,411.14 523.0,409.52 524.0,407.15 525.0,405.27 526.0,404.66 527.0,404.45 528.0,404.58 529.0,404.37 530.0,404.73 531.0,404.34 532.0,404.62 533.0,404.41 534.0,404.64 535.0,404.33 536.0,404.32 537.0,404.67 538.0,404.73 539.0,404.83 540.0,404.71 541.0,404.90 542.0,404.39 543.0,404.68 544.0,404.68 545.0,404.41 546.0,404.38 547.0,404.44 548.0,404.61 549.0,404.77 550.0,404.73 551.0,404.64 552.0,404.35 553.0,404.73 554.0,404.61 555.0,405.79 556.0,409.42 557.0,412.56 558.0,413.99 559.0,414.21 560.0,414.52 561.0,414.25 562.0,414.57 563.0,414.55 564.0,414.92 565.0,415.10 566.0,414.85 567.0,415.21 568.0,415.13 569.0,415.05 570.0,415.14 571.0,415.35 572.0,415.56 573.0,415.47 574.0,415.14 575.0,415.64 576.0,415.53 577.0,415.45 578.0,415.34 579.0,415.46 580.0,415.60 581.0,415.33 582.0,415.23 583.0,415.65 584.0,415.35 585.0,415.08 586.0,415.53 587.0,415.00 588.0,415.09 589.0,415.18 590.0,415.13 591.0,415.19 592.0,414.67 593.0,414.81 594.0,414.90 595.0,414.54 596.0,414.58 597.0,414.31 598.0,414.33 599.0,414.27 600.0,413.69 601.0,413.72 602.0,413.27 603.0,413.39 604.0,413.11 605.0,412.96 606.0,412.76 607.0,412.38 608.0,412.39 609.0,411.70 610.0,411.74 611.0,410.77 612.0,409.30 613.0,407.17 614.0,405.15 615.0,404.79 616.0,404.55 617.0,404.42 618.0,404.42 619.0,404.65 620.0,404.53 621.0,404.33 622.0,404.48 623.0,404.88 624.0,404.58 625.0,404.71 626.0,404.56 627.0,404.34 628.0,404.67 629.0,404.43 630.0,404.37 631.0,404.67 632.0,404.71 633.0,404.31 634.0,404.87 635.0,404.31 636.0,404.40 637.0,404.50 638.0,405.48 639.0,408.39 640.0,411.98 641.0,413.93 642.0,414.53 643.0,414.28 644.0,414.96 645.0,414.56 646.0,414.75 647.0,415.20 648.0,415.30 649.0,415.30 650.0,415.10 651.0,415.52 652.0,415.34 653.0,415.19 654.0,415.15 655.0,415.70 656.0,415.16 657.0,415.27 658.0,415.36 659.0,415.70 660.0,415.67 661.0,415.68 662.0,415.56 663.0,415.19 664.0,415.63 665.0,415.30 666.0,415.76 667.0,415.77 668.0,415.23 669.0,415.63 670.0,415.34 671.0,415.26 672.0,415.72 673.0,415.46 674.0,415.37 675.0,415.53 676.0,415.24 677.0,415.45 678.0,415.59 679.0,415.72 680.0,415.27 681.0,415.74 682.0,415.26 683.0,415.18 684.0,415.05 685.0,414.71 686.0,414.40 687.0,414.45 688.0,413.99 689.0,413.54 690.0,413.40 691.0,412.81 692.0,412.79 693.0,412.58 694.0,411.90 695.0,411.48 696.0,411.07 697.0,410.64 698.0,410.25" fill="none" stroke="#222" stroke-width="1.1"/></svg>
<div class="a t lbl" style="left:36.2px;top:97.0px">+4V</div>
<div class="a t lbl" style="left:34.7px;top:169.3px;letter-spacing:0.4px">-1V</div>
<div class="a t lbl" style="left:183.5px;top:97.0px;font-size:11.5px">Pin No.1</div>
<div class="a t lbl" style="left:301.7px;top:97.0px">Cur A : 2.43 V</div>
<div class="a t lbl" style="left:421px;top:97.0px">Avg : 2.45 V</div>
<div class="a t lbl" style="left:540.2px;top:97.0px">Cur B : 2.48 V</div>
<div class="a t lbl" style="left:36.2px;top:192.5px">+4V</div>
<div class="a t lbl" style="left:34.7px;top:264.8px;letter-spacing:0.4px">-1V</div>
<div class="a t lbl" style="left:183.5px;top:192.5px;font-size:11.5px">Pin No.3</div>
<div class="a t lbl" style="left:301.7px;top:192.5px">Cur A : 2.83 V</div>
<div class="a t lbl" style="left:421px;top:192.5px">Avg : 2.85 V</div>
<div class="a t lbl" style="left:540.2px;top:192.5px">Cur B : 2.96 V</div>
<div class="a t lbl" style="left:36.2px;top:287.2px">+4V</div>
<div class="a t lbl" style="left:34.7px;top:359.5px;letter-spacing:0.4px">-1V</div>
<div class="a t lbl" style="left:183.5px;top:287.2px;font-size:11.5px">Pin No.4</div>
<div class="a t lbl" style="left:301.7px;top:287.2px">Cur A : 2.10 V</div>
<div class="a t lbl" style="left:421px;top:287.2px">Avg : 2.08 V</div>
<div class="a t lbl" style="left:540.2px;top:287.2px">Cur B : 2.09 V</div>
<div class="a t lbl" style="left:36.2px;top:382.8px">+4V</div>
<div class="a t lbl" style="left:34.7px;top:455.1px;letter-spacing:0.4px">-1V</div>
<div class="a t lbl" style="left:183.5px;top:382.8px;font-size:11.5px">Pin No.6</div>
<div class="a t lbl" style="left:301.7px;top:382.8px">Cur A : 2.09 V</div>
<div class="a t lbl" style="left:421px;top:382.8px">Avg : 2.08 V</div>
<div class="a t lbl" style="left:540.2px;top:382.8px">Cur B : 2.09 V</div>
<div class="a t lbl" style="left:662.8px;top:458.3px;color:#222;font-size:11.5px">B</div>
<div class="a t lbl" style="left:672.8px;top:458.3px;color:#f02020;font-size:12px">A</div>
<div class="a" style="left:91px;top:40px;width:1px;height:1px;background:#2a2a2a"></div>
<div class="a" style="left:94px;top:40px;width:1px;height:1px;background:#2a2a2a"></div>
<div class="a" style="left:164px;top:40px;width:1px;height:1px;background:#2a2a2a"></div>
<div class="a" style="left:237px;top:40px;width:1px;height:1px;background:#2a2a2a"></div>
<div class="a" style="left:240px;top:40px;width:1px;height:1px;background:#2a2a2a"></div>
<div class="a" style="left:310px;top:40px;width:1px;height:1px;background:#2a2a2a"></div>
<div class="a" style="left:386px;top:40px;width:1px;height:1px;background:#2a2a2a"></div>
<div class="a" style="left:457px;top:40px;width:1px;height:1px;background:#2a2a2a"></div></body></html>
